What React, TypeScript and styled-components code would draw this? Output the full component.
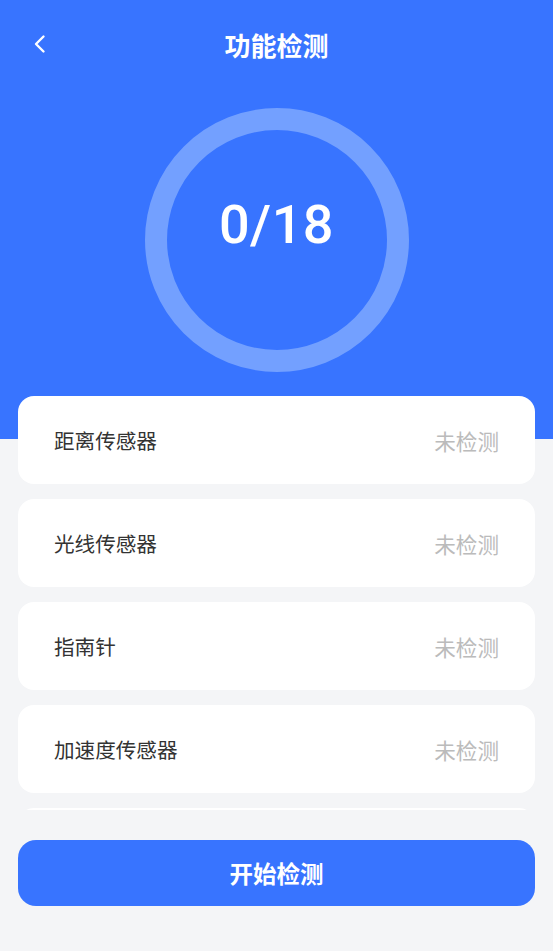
import React from "react";
import styled, { createGlobalStyle } from "styled-components";

const Global = createGlobalStyle`
  html, body { margin: 0; padding: 0; background: #f4f5f7; }
  body { font-family: "Noto Sans", "Noto Sans CJK SC", sans-serif; }
  * { box-sizing: border-box; }
`;

const Page = styled.div`
  width: 553px;
  height: 951px;
  position: relative;
  background: #f4f5f7;
  overflow: hidden;
  display: flex;
  flex-direction: column;
`;

const Header = styled.div`
  background: #3874ff;
  height: 439px;
  flex-shrink: 0;
  display: flex;
  flex-direction: column;
  margin-bottom: -43px;
`;

const NavBar = styled.div`
  height: 88px;
  display: grid;
  grid-template-columns: 80px 1fr 80px;
  align-items: center;
`;

const Back = styled.div`
  padding-left: 31px;
  display: flex;
  align-items: center;
  height: 100%;
`;

const Title = styled.h1`
  margin: 0;
  text-align: center;
  color: #fff;
  font-size: 26px;
  font-weight: 700;
  font-family: "Noto Sans CJK SC", sans-serif;
`;

const RingWrap = styled.div`
  display: flex;
  justify-content: center;
  margin-top: 20px;
`;

const Ring = styled.div`
  width: 264px;
  height: 264px;
  border-radius: 50%;
  border: 22px solid #73a0ff;
  display: flex;
  align-items: center;
  justify-content: center;
`;

const Count = styled.div`
  color: #fff;
  font-family: Roboto, sans-serif;
  font-size: 54px;
  font-weight: 500;
  margin-top: -32px;
  letter-spacing: 0.5px;
`;

const List = styled.div`
  height: 414px;
  overflow: hidden;
  padding: 0 18px;
  display: flex;
  flex-direction: column;
  gap: 15px;
  position: relative;
  flex-shrink: 0;
`;

const Card = styled.div`
  height: 88px;
  flex-shrink: 0;
  background: #fff;
  border-radius: 16px;
  display: flex;
  align-items: center;
  justify-content: space-between;
  padding: 0 36px;
  font-family: "Noto Sans CJK SC", sans-serif;
`;

const Label = styled.span`
  color: #333;
  font-size: 20.6px;
`;

const Status = styled.span`
  color: #bbbbbb;
  font-size: 21.6px;
`;

const Footer = styled.div`
  padding: 30px 18px 0;
`;

const StartButton = styled.button`
  width: 100%;
  height: 66px;
  border: none;
  border-radius: 18px;
  background: #3874ff;
  color: #fff;
  font-family: "Noto Sans CJK SC", sans-serif;
  font-size: 23.5px;
  font-weight: 700;
  display: flex;
  align-items: center;
  justify-content: center;
`;

const items = ["距离传感器", "光线传感器", "指南针", "加速度传感器"];

export default function App() {
  return (
    <>
      <Global />
      <Page>
        <Header>
          <NavBar>
            <Back>
              <svg width="16" height="22" viewBox="0 0 16 22" fill="none">
                <path d="M12.5 3.5 L5 11 L12.5 18.5" stroke="#fff" strokeWidth="2.4" strokeLinecap="round" strokeLinejoin="round" />
              </svg>
            </Back>
            <Title>功能检测</Title>
            <div />
          </NavBar>
          <RingWrap>
            <Ring>
              <Count>0/18</Count>
            </Ring>
          </RingWrap>
        </Header>
        <List>
          {items.map((t) => (
            <Card key={t}>
              <Label>{t}</Label>
              <Status>未检测</Status>
            </Card>
          ))}
          <Card aria-hidden="true" />
        </List>
        <Footer>
          <StartButton>开始检测</StartButton>
        </Footer>
      </Page>
    </>
  );
}
